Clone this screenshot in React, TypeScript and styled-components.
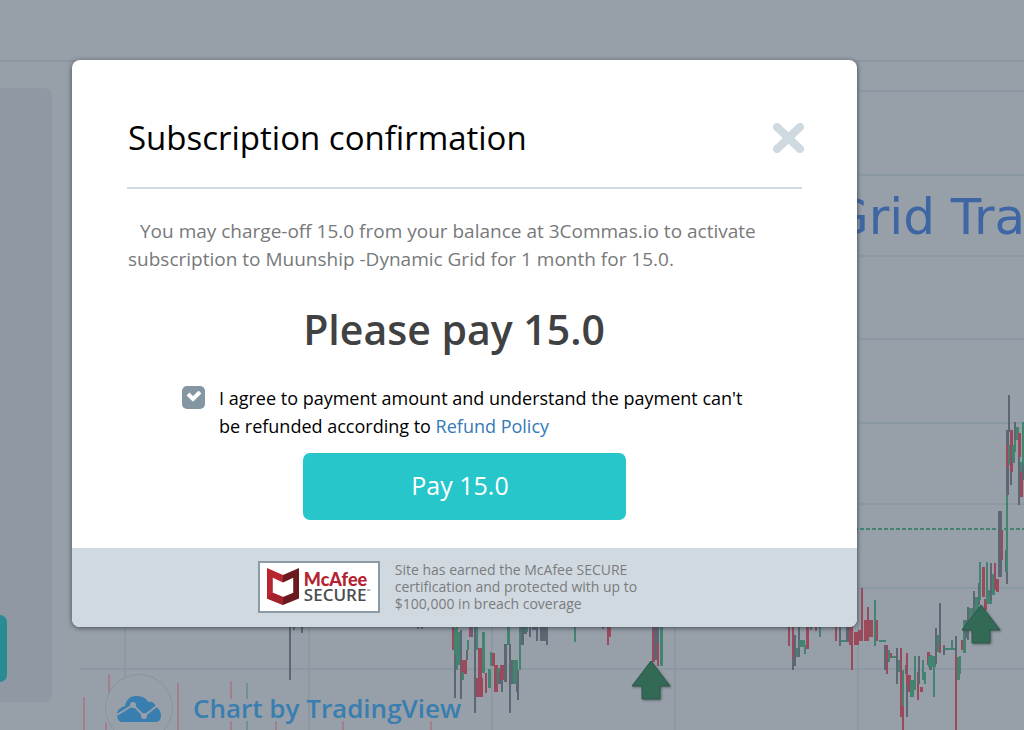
import React from "react";
import styled, { createGlobalStyle } from "styled-components";

const GlobalStyle = createGlobalStyle`
  *, *::before, *::after { box-sizing: border-box; }
  body { margin: 0; background: #979fa8; font-family: "Open Sans", "Noto Sans", sans-serif; }
  h1, h2, p { margin: 0; }
`;

/* ---------- dimmed trading page ---------- */

const Page = styled.div`
  position: relative;
  display: flex;
  flex-direction: column;
  height: 100vh;
  min-height: 640px;
  overflow: hidden;
  background: #979fa8;
`;

const TopBar = styled.header`
  flex: none;
  height: 62px;
  border-bottom: 2px solid #8d969f;
`;

const Workspace = styled.div`
  flex: 1;
  display: flex;
  gap: 28px;
  min-height: 0;
`;

const SidePanel = styled.aside`
  flex: none;
  display: flex;
  flex-direction: column;
  justify-content: flex-end;
  width: 52px;
  margin: 26px 0 28px;
  padding-bottom: 20px;
  border-radius: 0 8px 8px 0;
  background: #8f98a3;
`;

const SideTab = styled.div`
  width: 7px;
  height: 67px;
  border-radius: 0 7px 7px 0;
  background: #2a8b92;
`;

const ChartArea = styled.section`
  position: relative;
  flex: 1;
  min-width: 0;
`;

const ChartSvg = styled.svg`
  display: block;
  width: 100%;
  height: 100%;
`;

const ChartTitle = styled.p`
  position: absolute;
  top: 125px;
  left: 750px;
  font: 50px/60px "DejaVu Sans", sans-serif;
  color: #3f66a4;
  white-space: nowrap;
`;

const Attribution = styled.div`
  position: absolute;
  left: 25px;
  bottom: -12px;
  display: flex;
  align-items: center;
  gap: 20px;
  font: 600 26px/36px "Trebuchet MS", "Open Sans", sans-serif;
  color: #397eb0;
  white-space: nowrap;
`;

const AttributionMark = styled.span`
  display: flex;
  align-items: center;
  justify-content: center;
  width: 68px;
  height: 68px;
  border: 1px solid #8b939b;
  border-radius: 50%;
  background: #979fa8;
`;

const RED = "#9b4a5c";
const GREEN = "#438470";
const GREY = "#5d6672";
const PALE = "#a37e8b";
const MIST = "#6f9489";

type Candle = [number, number, number, string, number?];

const candles: Candle[] = [
  [84, 697, 740, PALE], [109, 674, 697, PALE], [106, 723, 740, PALE], [178, 683, 740, PALE],
  [231, 681, 699, PALE], [231, 721, 740, PALE], [247, 683, 699, MIST], [247, 721, 740, MIST],
  [276, 721, 740, PALE], [343, 721, 740, PALE], [431, 721, 740, PALE],
  [290, 620, 680, GREY], [294, 620, 630, GREY], [302, 620, 633, GREY],
  [418, 620, 629, GREY], [422, 620, 629, GREY],
  [453, 620, 650, RED], [455, 628, 654, GREEN], [455, 654, 698, GREY], [457, 620, 670, GREEN],
  [459, 632, 665, GREEN], [461, 630, 699, GREY], [464, 660, 674, RED, 6], [463, 672, 680, GREEN],
  [467, 650, 660, GREY], [468, 640, 650, GREEN], [470, 620, 637, RED], [472, 620, 637, GREY],
  [475, 620, 713, GREY], [477, 620, 650, GREEN], [480, 648, 680, RED, 4], [479, 678, 697, RED, 7],
  [483, 632, 673, GREEN, 3], [486, 673, 693, RED], [489, 669, 688, GREEN, 3],
  [491, 652, 666, GREEN], [493, 653, 666, RED, 3], [496, 665, 692, RED, 4], [498, 668, 684, GREEN, 3],
  [500, 672, 684, GREY, 4], [502, 665, 680, RED, 4], [502, 680, 692, GREY], [505, 644, 682, GREY, 3],
  [508, 620, 645, GREEN, 3], [510, 644, 713, GREY], [512, 660, 684, GREY, 4], [515, 660, 684, GREEN, 5],
  [517, 682, 692, GREY, 3], [518, 670, 700, GREY], [520, 620, 670, GREEN], [522, 620, 645, GREY, 3],
  [525, 620, 634, GREY, 3], [527, 620, 632, GREEN], [530, 620, 637, GREY], [534, 620, 630, GREY, 4],
  [537, 620, 641, GREY], [543, 620, 641, GREY, 7], [547, 620, 645, GREY],
  [575, 620, 642, GREEN], [603, 620, 629, GREY], [608, 620, 645, RED], [610, 620, 637, RED],
  [653, 620, 662, RED, 3], [656, 620, 660, GREY, 5], [658, 643, 666, RED], [661, 620, 666, GREEN, 3],
  [789, 620, 646, RED], [793, 620, 660, RED], [793, 658, 670, GREY], [795, 635, 666, GREY],
  [799, 620, 657, GREY], [797, 648, 657, GREEN], [802, 640, 647, GREEN, 6], [805, 645, 654, GREEN],
  [807, 620, 649, RED, 3], [811, 620, 630, GREY], [816, 620, 631, RED], [820, 620, 637, GREEN],
  [836, 620, 641, RED], [840, 620, 646, GREY], [843, 640, 642, GREEN, 5], [847, 620, 642, GREY, 3],
  [850, 620, 645, RED], [852, 620, 670, RED], [856, 632, 645, RED, 5], [860, 630, 641, RED, 5],
  [862, 588, 640, RED], [866, 620, 641, RED, 5], [868, 607, 641, RED], [871, 620, 637, RED, 4],
  [875, 600, 646, GREEN], [877, 620, 641, RED], [882, 640, 642, GREEN, 7],
  [885, 645, 670, GREY, 3], [887, 645, 674, RED], [889, 650, 662, GREEN], [891, 653, 658, RED],
  [895, 656, 658, GREEN, 6], [897, 648, 684, GREY], [899, 660, 672, GREEN], [901, 648, 717, RED],
  [903, 670, 706, GREEN], [903, 706, 740, RED], [906, 665, 674, GREY, 3], [907, 653, 685, RED],
  [907, 685, 717, GREY], [909, 675, 692, RED, 3], [912, 680, 697, GREEN, 4], [915, 656, 690, GREEN],
  [918, 672, 700, RED], [919, 656, 684, GREY], [921, 687, 692, RED, 3], [923, 660, 680, GREEN],
  [925, 672, 684, GREEN], [928, 652, 665, RED, 3], [930, 655, 670, GREY, 3], [932, 656, 667, GREEN, 8],
  [934, 656, 697, GREEN], [936, 628, 664, GREY], [938, 635, 652, GREEN], [940, 603, 653, GREY],
  [940, 644, 653, RED], [949, 648, 650, GREEN, 13], [944, 645, 655, GREY], [952, 640, 650, GREEN],
  [956, 636, 655, GREY], [956, 655, 740, RED], [958, 657, 680, GREEN, 3], [960, 656, 674, GREEN],
  [962, 640, 650, RED], [964, 620, 653, GREEN, 3], [966, 620, 638, GREY], [968, 607, 640, GREY],
  [971, 608, 625, GREEN, 4], [974, 591, 615, GREY], [977, 597, 612, GREEN, 4], [979, 583, 605, GREY],
  [980, 562, 600, GREEN], [983, 567, 597, RED, 3], [985, 599, 610, RED, 3], [987, 562, 602, GREEN],
  [989, 590, 604, GREEN, 5], [991, 563, 600, GREY], [993, 574, 595, GREEN, 3], [995, 563, 590, RED],
  [997, 579, 592, RED, 3], [1000, 511, 577, GREY, 4], [1002, 530, 560, RED], [1006, 550, 572, GREY],
  [1007, 495, 574, GREEN], [1007, 572, 584, GREY], [1007, 430, 495, GREY, 3], [1009, 395, 432, GREY],
  [1007, 445, 467, RED, 3], [1009, 445, 465, GREEN], [1011, 430, 472, RED, 3], [1011, 472, 485, GREY],
  [1013, 445, 463, GREEN, 3], [1015, 422, 440, GREY], [1015, 440, 452, GREEN], [1017, 427, 440, GREEN, 3],
  [1019, 433, 457, RED, 3], [1019, 457, 505, GREY], [1021, 470, 497, RED, 3], [1021, 462, 472, GREEN, 3],
  [1023, 422, 465, GREEN], [1023, 465, 480, GREY],
];

function BuyArrow({ x, y }: { x: number; y: number }) {
  return (
    <path
      d={`M${x} ${y} l19 25 h-10 v13 h-18 v-13 h-10 Z`}
      fill="#326a56"
      stroke="#28584a"
      strokeWidth="1"
      filter="url(#arrowShadow)"
    />
  );
}

function Chart() {
  return (
    <ChartSvg aria-hidden="true">
      <defs>
        <filter id="arrowShadow" x="-20%" y="-20%" width="140%" height="140%">
          <feDropShadow dx="1" dy="1" stdDeviation="1" floodColor="#4a5058" floodOpacity="0.7" />
        </filter>
      </defs>
      <g transform="translate(-80 -62)">
        {[91, 175, 256, 339, 423, 504, 588, 669].map((y) => (
          <rect key={y} x="80" y={y - 1} width="100%" height="2" fill="#8a99a2" />
        ))}
        {[125, 309, 492, 675, 858].map((x) => (
          <rect key={x} x={x - 1} y="62" width="2" height="100%" fill="#8a99a2" />
        ))}
        <line x1="80" y1="529" x2="2000" y2="529" stroke="#438470" strokeWidth="2" strokeDasharray="4 2" />
        {candles.map(([x, top, bottom, color, w = 2], i) => (
          <rect key={i} x={x - Math.floor(w / 2)} y={top} width={w} height={bottom - top} fill={color} />
        ))}
        <BuyArrow x={651} y={661} />
        <BuyArrow x={981} y={605} />
      </g>
    </ChartSvg>
  );
}

/* ---------- dialog ---------- */

const Overlay = styled.div`
  position: absolute;
  inset: 0;
  padding: 60px 167px 0 72px;
`;

const Dialog = styled.section`
  overflow: hidden;
  border-radius: 8px;
  background: #fff;
  box-shadow: 0 1px 5px rgba(40, 48, 58, 0.75);
`;

const DialogBody = styled.form`
  display: flex;
  flex-direction: column;
  align-items: center;
  padding: 54px 55px 28px;
`;

const DialogHeader = styled.header`
  display: flex;
  align-self: stretch;
  align-items: center;
  justify-content: space-between;
  padding-bottom: 25px;
  border-bottom: 2px solid #cfdae1;
`;

const Title = styled.h1`
  padding-left: 1px;
  font-size: 33px;
  font-weight: 400;
  line-height: 48px;
  color: #000;
`;

const CloseButton = styled.button`
  display: flex;
  margin-right: -2px;
  padding: 0;
  border: 0;
  background: none;
  cursor: pointer;
`;

const Description = styled.p`
  align-self: stretch;
  margin-top: 28px;
  padding-left: 1px;
  font-size: 19px;
  line-height: 28px;
  text-indent: 12px;
  color: #77797b;
`;

const Amount = styled.h2`
  margin-top: 28px;
  padding-right: 21px;
  font-size: 41px;
  font-weight: 600;
  line-height: 56px;
  color: #404143;
`;

const Agreement = styled.div`
  display: flex;
  gap: 14px;
  width: 565px;
  max-width: 100%;
  margin-top: 27px;
  font-size: 18px;
  line-height: 28px;
  color: #000;
`;

const Checkbox = styled.input`
  flex: none;
  appearance: none;
  width: 23px;
  height: 23px;
  margin: 2px 0 0;
  border-radius: 5px;
  background: #8496a1;
`;

const CheckboxBox = styled.span`
  position: relative;
  display: flex;
  flex: none;

  svg {
    position: absolute;
    top: 7px;
    left: 4px;
    pointer-events: none;
  }
`;

const PolicyLink = styled.a`
  color: #337ab7;
  text-decoration: none;
`;

const PayButton = styled.button`
  width: 323px;
  height: 67px;
  margin-top: 13px;
  padding: 0 9px 3px 0;
  border: 0;
  border-radius: 7px;
  background: #26c6ca;
  font-family: inherit;
  font-size: 25px;
  color: #fff;
  cursor: pointer;
`;

const DialogFooter = styled.footer`
  display: flex;
  align-items: center;
  justify-content: center;
  gap: 15px;
  min-height: 79px;
  padding: 0 34px 2px 0;
  background: #d1d9e0;
`;

const Badge = styled.div`
  display: flex;
  align-items: center;
  gap: 5px;
  width: 122px;
  height: 52px;
  padding-left: 7px;
  border: 2px solid #8b9aa4;
  background: #fff;
`;

const BadgeBrand = styled.div`
  font: 900 18px/16px Lato, sans-serif;
  color: #b4232f;
`;

const BadgeText = styled.div`
  display: flex;
  align-items: flex-start;
  font: 600 17px/16px "Open Sans", sans-serif;
  color: #4b4e50;
`;

const Trademark = styled.span`
  font-size: 5px;
  line-height: 8px;
`;

const Coverage = styled.p`
  font-size: 14px;
  line-height: 17px;
  color: #7a7c7e;
`;

export default function App() {
  return (
    <Page>
      <GlobalStyle />
      <TopBar />
      <Workspace>
        <SidePanel>
          <SideTab />
        </SidePanel>
        <ChartArea>
          <Chart />
          <ChartTitle>Grid Tra</ChartTitle>
          <Attribution>
            <AttributionMark>
              <svg width="44" height="27" viewBox="0 0 44 27" aria-hidden="true">
                <path
                  d="M5 27C2 27 0 24 0 19C0 15 4 12 8 11C9 5 13 1 19 1C25 1 29 3 31 7C35 6 38 8 39 12C42 13 44 17 44 21C44 24 42 27 39 27Z"
                  fill="#397eb0"
                />
                <path d="M0 20L16 10L27 21L41 10" fill="none" stroke="#979fa8" strokeWidth="2" />
                <circle cx="16" cy="10" r="3" fill="#979fa8" />
                <circle cx="27" cy="21" r="3" fill="#979fa8" />
              </svg>
            </AttributionMark>
            Chart by TradingView
          </Attribution>
        </ChartArea>
      </Workspace>

      <Overlay>
        <Dialog role="dialog" aria-modal="true" aria-labelledby="dialog-title">
          <DialogBody onSubmit={(e) => e.preventDefault()}>
            <DialogHeader>
              <Title id="dialog-title">Subscription confirmation</Title>
              <CloseButton type="button" aria-label="Close">
                <svg width="31" height="30" viewBox="0 0 31 30" aria-hidden="true">
                  <path d="M4 4L27 26M27 4L4 26" stroke="#cfdae0" strokeWidth="8" strokeLinecap="round" />
                </svg>
              </CloseButton>
            </DialogHeader>
            <Description>
              You may charge-off 15.0 from your balance at 3Commas.io to activate
              <br />
              subscription to Muunship -Dynamic Grid for 1 month for 15.0.
            </Description>
            <Amount>Please pay 15.0</Amount>
            <Agreement>
              <CheckboxBox>
                <Checkbox id="agree" type="checkbox" defaultChecked />
                <svg width="16" height="12" viewBox="0 0 16 12" aria-hidden="true">
                  <path d="M2 3L7 8L14 1" fill="none" stroke="#fff" strokeWidth="4" />
                </svg>
              </CheckboxBox>
              <label htmlFor="agree">
                I agree to payment amount and understand the payment can't be refunded according to{" "}
                <PolicyLink href="#refund">Refund Policy</PolicyLink>
              </label>
            </Agreement>
            <PayButton type="submit">Pay 15.0</PayButton>
          </DialogBody>
          <DialogFooter>
            <Badge>
              <svg width="32" height="37" viewBox="81 78 94 108" aria-hidden="true">
                <path d="M81 78L128 98V120L98 106V150L128 163V186L81 167Z" fill="#b8252f" />
                <path d="M175 78L128 98V120L158 106V150L128 163V186L175 167Z" fill="#6b1a20" />
                <path d="M81 167L98 150L128 163V186Z" fill="#a4222b" />
              </svg>
              <div>
                <BadgeBrand>McAfee</BadgeBrand>
                <BadgeText>
                  SECURE<Trademark>™</Trademark>
                </BadgeText>
              </div>
            </Badge>
            <Coverage>
              Site has earned the McAfee SECURE
              <br />
              certification and protected with up to
              <br />
              $100,000 in breach coverage
            </Coverage>
          </DialogFooter>
        </Dialog>
      </Overlay>
    </Page>
  );
}
